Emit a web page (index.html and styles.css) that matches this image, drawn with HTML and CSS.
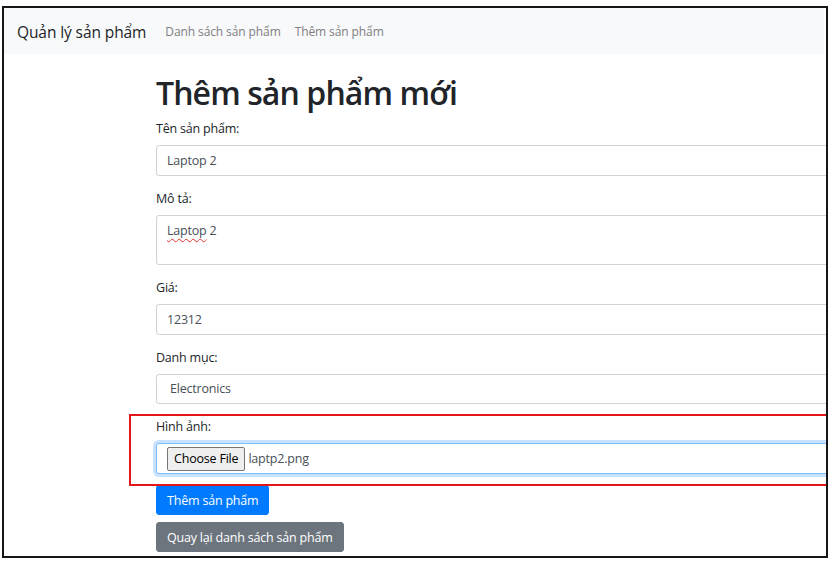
FILE: index.html
```html
<!DOCTYPE html>
<html lang="vi">
<head>
<meta charset="utf-8">
<title>Thêm sản phẩm mới</title>
<link rel="stylesheet" href="styles.css">
</head>
<body>
<div class="frame">
  <nav class="navbar">
    <span class="brand">Quản lý sản phẩm</span>
    <a class="nav-link">Danh sách sản phẩm</a>
    <a class="nav-link">Thêm sản phẩm</a>
  </nav>
  <main class="container">
    <h1 class="title">Thêm sản phẩm mới</h1>
    <div class="group">
      <label class="label">Tên sản phẩm:</label>
      <div class="field">Laptop 2</div>
    </div>
    <div class="group">
      <label class="label">Mô tả:</label>
      <div class="field textarea"><span class="misspelled">Laptop</span> 2</div>
    </div>
    <div class="group">
      <label class="label">Giá:</label>
      <div class="field">12312</div>
    </div>
    <div class="group">
      <label class="label">Danh mục:</label>
      <div class="field select">Electronics</div>
    </div>
    <div class="group">
      <label class="label">Hình ảnh:</label>
      <div class="field file"><span class="choose">Choose File</span><span class="filename">laptp2.png</span></div>
    </div>
    <div class="actions">
      <button class="btn btn-primary">Thêm sản phẩm</button>
      <button class="btn btn-secondary">Quay lại danh sách sản phẩm</button>
    </div>
    <div class="highlight"></div>
  </main>
</div>
</body>
</html>
```
FILE: styles.css
```css
* { box-sizing: border-box; }
html, body { margin: 0; padding: 0; background: #fff; }
body {
  font-family: "Open Sans", "Noto Sans", sans-serif;
  color: #212529;
}
.frame {
  margin: 6px 0 0 2px;
  width: 826px;
  height: 552px;
  border: 2px solid #161616;
  overflow: hidden;
  position: relative;
}
.navbar {
  display: flex;
  align-items: center;
  height: 46px;
  padding-left: 13px;
  padding-top: 1px;
  background: #f8f9fa;
  margin-right: 2px;
}
.brand {
  font-size: 15.5px;
  letter-spacing: -0.1px;
  color: #212529;
  margin-right: 19px;
}
.nav-link {
  font-size: 12px;
  letter-spacing: -0.1px;
  color: #7f8081;
  margin-right: 14px;
}
.container {
  padding-left: 152px;
  width: 1200px;
}
.title {
  margin: 19px 0 6px 0;
  font-size: 32px;
  font-weight: 600;
  letter-spacing: -0.9px;
  line-height: 40px;
  color: #212529;
}
.group { margin-bottom: 13px; }
.label {
  display: block;
  font-size: 12.5px;
  letter-spacing: -0.2px;
  line-height: 20px;
  margin-bottom: 6px;
  color: #212529;
}
.field {
  height: 31px;
  border: 1px solid #ced4da;
  border-radius: 3px;
  padding: 0 10px;
  font-size: 12.5px;
  letter-spacing: -0.2px;
  line-height: 29px;
  color: #495057;
  background: #fff;
}
.textarea {
  height: 50px;
  line-height: 20px;
  padding-top: 5px;
}
.misspelled {
  text-decoration: underline wavy #e03030;
  text-decoration-thickness: 1px;
  text-underline-offset: 3px;
}
.select { padding-left: 13px; height: 30px; line-height: 28px; }
.file {
  display: flex;
  align-items: center;
  border-color: #80bdff;
  box-shadow: 0 0 0 3px rgba(0, 123, 255, 0.22);
}
.choose {
  display: inline-block;
  height: 24px;
  line-height: 22px;
  padding: 0 6px;
  border: 1px solid #767676;
  border-radius: 2px;
  background: #efefef;
  color: #000;
  font-size: 12.5px;
  margin-right: 3px;
}
.filename { color: #495057; }
.actions {
  display: flex;
  flex-direction: column;
  align-items: flex-start;
  gap: 7px;
  margin-top: -2px;
}
.btn {
  font-family: inherit;
  font-size: 12.5px;
  letter-spacing: -0.2px;
  height: 30px;
  padding: 0 10px;
  border: 1px solid transparent;
  border-radius: 3px;
  color: #fff;
}
.btn-primary { background: #007bff; border-color: #007bff; }
.btn-secondary { background: #6c757d; border-color: #6c757d; }
.highlight {
  position: absolute;
  left: 125px;
  top: 406px;
  width: 720px;
  height: 72px;
  border: 2px solid #e3161b;
  pointer-events: none;
}
```
